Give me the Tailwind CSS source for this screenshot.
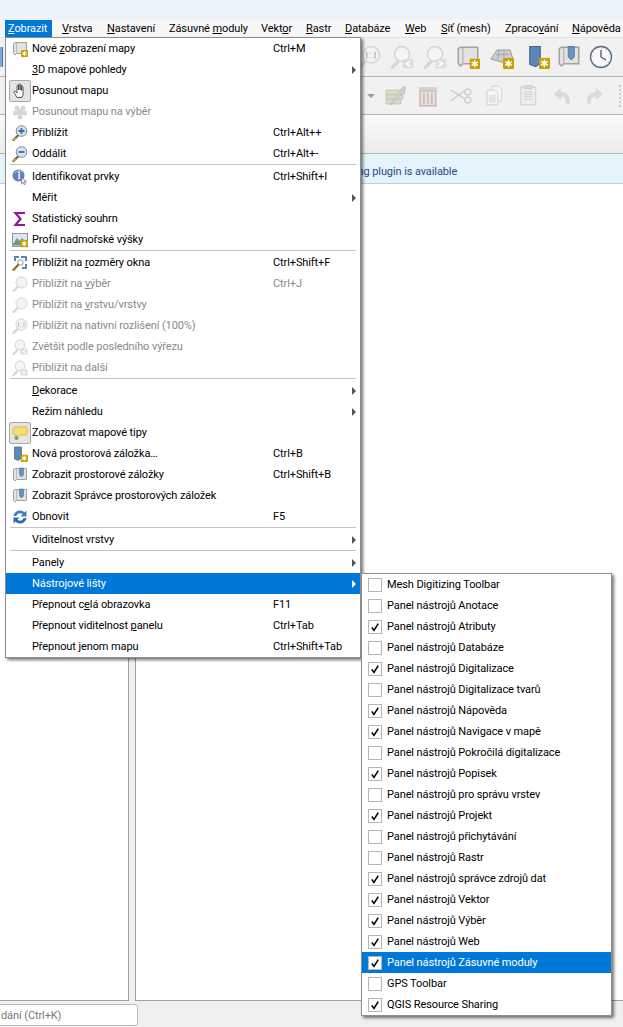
<!doctype html>
<html><head><meta charset="utf-8"><script src="https://cdn.jsdelivr.net/npm/@tailwindcss/browser@4"></script></head>
<body class="m-0 overflow-hidden">
<svg width="0" height="0" class="absolute">
<defs>
<symbol id="badge" viewBox="0 0 8 8"><rect width="8" height="8" rx="1" fill="#c9a000"/><path d="M4 1.2V6.8M1.6 2.6L6.4 5.4M1.6 5.4L6.4 2.6" stroke="#fff" stroke-width="1"/><circle cx="4" cy="4" r="1.5" fill="#fff"/></symbol>
<symbol id="scroll" viewBox="0 0 16 16"><path d="M3 1.5h11.500v11H4.500L3 14 1.500 12.500V2.500z" fill="#e2e2de" stroke="#a2a2a2"/><path d="M4.500 2v10.500" stroke="#bbb"/></symbol>
<symbol id="mapview" viewBox="0 0 16 16"><use href="#scroll" width="16" height="16"/><use href="#badge" x="9" y="9" width="7" height="7"/></symbol>
<symbol id="hand" viewBox="0 0 16 16"><path d="M5 14.500L2.200 9.500c-.6-1.200.8-1.900 1.500-.9L5 10V3c0-1.100 1.500-1.100 1.500 0v4-5.200c0-1.100 1.600-1.100 1.600 0V7 2.500c0-1.100 1.500-1.100 1.500 0V7.500 4.200c0-1.100 1.500-1.100 1.500 0V11c0 1.500-.7 2.500-1.300 3.500z" fill="#fff" stroke="#444" stroke-width=".9"/></symbol>
<symbol id="selpan" viewBox="0 0 16 16"><g fill="#d6d6d6"><circle cx="5" cy="4" r="2.500"/><circle cx="11" cy="4" r="2.500"/><circle cx="3.500" cy="9" r="2.500"/><circle cx="12.500" cy="9" r="2.500"/><circle cx="8" cy="8" r="3"/><circle cx="8" cy="13" r="2.500"/></g></symbol>
<symbol id="zoomin" viewBox="0 0 16 16"><path d="M1.500 15L6 10.500" stroke="#7a6a30" stroke-width="2.400" stroke-linecap="round"/><path d="M1.500 15L3.500 13" stroke="#e0b030" stroke-width="1.400"/><circle cx="9.500" cy="6" r="5.300" fill="#d9e3ef" stroke="#7b8796"/><path d="M9.500 3v6M6.500 6h6" stroke="#3e6aa8" stroke-width="1.800"/></symbol>
<symbol id="zoomout" viewBox="0 0 16 16"><path d="M1.500 15L6 10.500" stroke="#7a6a30" stroke-width="2.400" stroke-linecap="round"/><path d="M1.500 15L3.500 13" stroke="#e0b030" stroke-width="1.400"/><circle cx="9.500" cy="6" r="5.300" fill="#d9e3ef" stroke="#7b8796"/><path d="M6.500 6h6" stroke="#3e6aa8" stroke-width="1.800"/></symbol>
<symbol id="identify" viewBox="0 0 16 16"><circle cx="6.500" cy="6.500" r="6" fill="#5b84b8"/><path d="M3 4a5 4 0 0 1 7-1.500" stroke="#b9cde6" fill="none"/><path d="M6.200 5.500h1.300l-.6 4h1" stroke="#fff" stroke-width="1.400" fill="none"/><circle cx="7" cy="3.500" r=".9" fill="#fff"/><path d="M9.500 8.500l5 4-2.200.3 1.200 2.200-1.400.6-1.100-2.200-1.500 1.400z" fill="#eee" stroke="#777" stroke-width=".8"/></symbol>
<symbol id="sigma" viewBox="0 0 16 16"><path d="M13 2H3.500L8.500 8 3.500 14H13" fill="none" stroke="#93159b" stroke-width="2.200"/></symbol>
<symbol id="profile" viewBox="0 0 16 16"><rect x=".5" y="1.500" width="15" height="13" fill="#dfe6ee" stroke="#8f9aa6"/><path d="M1 12l4-6 3 3 2-3 5 5v2.500H1z" fill="#6f9a7c"/><use href="#badge" x="8.500" y="8" width="7.500" height="7.500"/></symbol>
<symbol id="zoomfull" viewBox="0 0 16 16"><path d="M2 1h5v2H4v3H2zM9 1h6v5h-2V3H9zM13 9h2v5h-5v-2h3z" fill="#5b86bd"/><rect x="5" y="4" width="7" height="7" fill="#e6edf5"/><circle cx="8.500" cy="7.500" r="2.500" fill="#fff" stroke="#9ab"/><path d="M1.500 15L6 10" stroke="#8a7220" stroke-width="2.200" stroke-linecap="round"/></symbol>
<symbol id="zgrey" viewBox="0 0 16 16"><path d="M1.500 15L5.500 11" stroke="#d8d8d0" stroke-width="2.400" stroke-linecap="round"/><circle cx="9.500" cy="6.500" r="5.500" fill="#f3f3f3" stroke="#d4d4d4"/></symbol>
<symbol id="z11" viewBox="0 0 16 16"><path d="M1.500 15L5.500 11" stroke="#d8d8d0" stroke-width="2.400" stroke-linecap="round"/><circle cx="9.500" cy="6.500" r="5.500" fill="#f3f3f3" stroke="#d4d4d4"/><path d="M6.500 4.500V9M9 5v.5M9 8v.5M12 4.500V9" stroke="#bdbdbd" stroke-width="1"/></symbol>
<symbol id="zlast" viewBox="0 0 16 16"><path d="M1.500 15L5 11.500" stroke="#d8d8d0" stroke-width="2.200" stroke-linecap="round"/><circle cx="8" cy="6" r="5" fill="#f5f5f5" stroke="#d4d4d4"/><rect x="8.500" y="9.500" width="7" height="6" fill="#d8dde2"/><path d="M13.500 10.800l-2.500 1.700 2.500 1.700" stroke="#fff" stroke-width="1.200" fill="none"/></symbol>
<symbol id="znext" viewBox="0 0 16 16"><path d="M1.500 15L5 11.500" stroke="#d8d8d0" stroke-width="2.200" stroke-linecap="round"/><circle cx="8" cy="6" r="5" fill="#f5f5f5" stroke="#d4d4d4"/><rect x="8.500" y="9.500" width="7" height="6" fill="#d8dde2"/><path d="M10.500 10.800l2.500 1.700-2.500 1.700" stroke="#fff" stroke-width="1.200" fill="none"/></symbol>
<symbol id="tips" viewBox="0 0 16 16"><path d="M3 2h10.500c1 0 1.500 .6 1.500 1.500v5c0 1-.6 1.500-1.500 1.500H7l-3 2.500V10H3c-1 0-1.800-.6-1.800-1.500v-5C1.200 2.600 2 2 3 2z" fill="#f6dd72" stroke="#d9b84a"/><circle cx="4.500" cy="13" r="2" fill="#7aa05a"/></symbol>
<symbol id="bknew" viewBox="0 0 16 16"><path d="M2.500 1h7v11l-3 2.500-4-1.500z" fill="#5a86b8" stroke="#3d6594" stroke-width=".7"/><use href="#badge" x="8.500" y="8.500" width="7.500" height="7.500"/></symbol>
<symbol id="bks" viewBox="0 0 16 16"><use href="#scroll" width="16" height="16"/><path d="M7.500 1h4v7l-2 2-2-2z" fill="#6a92c0" stroke="#4d77a6" stroke-width=".6"/></symbol>
<symbol id="refresh" viewBox="0 0 16 16"><path d="M1.500 7C2 3.500 5 1.500 8 1.500c2 0 3.500 .8 4.500 2L14.500 1.500v6h-6l2-2C9.800 4.700 9 4.300 8 4.300 6.300 4.300 5 5.300 4.500 7z" fill="#3f7fc2"/><path d="M14.500 9c-.5 3.500-3.500 5.500-6.500 5.500-2 0-3.500-.8-4.500-2L1.500 14.500v-6h6l-2 2c.7.8 1.500 1.200 2.500 1.200 1.700 0 3-1 3.500-2.700z" fill="#2a6cb0"/></symbol>
<symbol id="check" viewBox="0 0 14 14"><path d="M3.300 7.500L5.800 11 10.800 3" fill="none" stroke="#000" stroke-width="1.800"/></symbol>
</defs>
</svg>
<div class="relative w-[623px] h-[1027px] overflow-hidden bg-[#f0f0f0] font-['Roboto'] text-[11px] tracking-[-0.1px] text-black flex flex-col">
<div class="h-[20px] bg-[#eef3fa]"></div>
<div class="h-[17px] flex bg-[#f7f7f7] items-center whitespace-nowrap leading-[18px]">
 <span class="ml-[5px] w-[47px] h-[17px] bg-[#0078d7] text-white pl-[3px]"><u>Z</u>obrazit</span>
 <span class="ml-[10px] w-[45px]"><u>V</u>rstva</span>
 <span class="w-[62px]"><u>N</u>astavení</span>
 <span class="w-[92px]">Zásuvné <u>m</u>oduly</span>
 <span class="w-[45px]">Vekt<u>o</u>r</span>
 <span class="w-[39px]"><u>R</u>astr</span>
 <span class="w-[60px]"><u>D</u>atabáze</span>
 <span class="w-[36px]"><u>W</u>eb</span>
 <span class="w-[64px]"><u>S</u>íť (mesh)</span>
 <span class="w-[67px]">Zpraco<u>v</u>ání</span>
 <span><u>N</u>ápověda</span>
</div>
<!-- toolbar 1 -->
<div class="h-[40px] border-t border-b border-t-[#e4e4e4] border-b-[#b5b5b5] bg-[#f1f1f1] relative flex items-center">
 <div class="w-[3px] h-[20px] bg-[#7fa9d6] border-r border-[#4a78ad]"></div>
 <div class="ml-[362px] flex items-center">
  <svg class="w-[24px] h-[24px] -ml-[8px]" viewBox="0 0 16 16"><use href="#z11"/></svg>
  <svg class="w-[24px] h-[24px] ml-[9px]" viewBox="0 0 16 16"><use href="#zlast"/></svg>
  <svg class="w-[24px] h-[24px] ml-[9px]" viewBox="0 0 16 16"><use href="#znext"/></svg>
  <svg class="w-[24px] h-[24px] ml-[9px]" viewBox="0 0 16 16"><use href="#mapview"/></svg>
  <svg class="w-[24px] h-[24px] ml-[10px]" viewBox="0 0 24 24"><path d="M1 14L7 5h13l3 9-8 4z" fill="#cfcfcf" stroke="#999"/><path d="M6 10l13-1M9 5l-1 9M14 5l0 12" stroke="#a8a8a8" fill="none"/><use href="#badge" x="13" y="13" width="11" height="11"/></svg>
  <svg class="w-[24px] h-[24px] ml-[12px]" viewBox="0 0 16 16"><use href="#bknew"/></svg>
  <svg class="w-[24px] h-[24px] ml-[7px]" viewBox="0 0 16 16"><use href="#bks"/></svg>
  <svg class="w-[24px] h-[24px] ml-[8px]" viewBox="0 0 24 24"><circle cx="12" cy="12" r="10.500" fill="#fafafa" stroke="#5a6a7a" stroke-width="1.300"/><circle cx="12" cy="12" r="8.800" fill="none" stroke="#7ea6d0" stroke-dasharray="1 3.600"/><path d="M12 5v7l5 3" fill="none" stroke="#555" stroke-width="1.300"/></svg>
 </div>
</div>
<!-- toolbar 2 -->
<div class="h-[38px] border-b border-[#b5b5b5] bg-[#f1f1f1] flex items-center">
 <div class="ml-[367px] w-0 h-0 border-x-[4px] border-t-[4px] border-x-transparent border-t-[#999]"></div>
 <svg class="ml-[10px] w-[22px] h-[22px]" viewBox="0 0 22 22"><path d="M1 5h19v4H1zM1 10h17v4H1zM1 15h15v4H1z" fill="#dcdcc8" stroke="#c4c4b0"/><path d="M19 1l2 2-12 15-3 2 1-3z" fill="#d8d8d0" stroke="#bbb"/></svg>
 <svg class="ml-[11px] w-[20px] h-[22px]" viewBox="0 0 20 22"><path d="M1 2h18v3H1z" fill="#d8cfc8"/><path d="M2 6h16v15H2z" fill="#e8e0dc" stroke="#c9b9b4" stroke-width="1.500"/><path d="M6 8v11M10 8v11M14 8v11" stroke="#c9b9b4" stroke-width="1.500"/></svg>
 <svg class="ml-[13px] w-[22px] h-[18px]" viewBox="0 0 22 18"><path d="M1 3l14 9M1 14l13-10" stroke="#cfcfcf" stroke-width="1.500"/><circle cx="18" cy="5" r="3" fill="none" stroke="#cfcfcf" stroke-width="1.500"/><circle cx="18" cy="13" r="3" fill="none" stroke="#cfcfcf" stroke-width="1.500"/></svg>
 <svg class="ml-[14px] w-[17px] h-[21px]" viewBox="0 0 17 21"><path d="M6 1h7l3 3v12H6z" fill="#f6f6f6" stroke="#d4d4d4"/><path d="M1 5h8l3 3v12H1z" fill="#f6f6f6" stroke="#cfcfcf"/><path d="M3 11h7M3 13h7M3 15h7M3 17h7" stroke="#d4d4d4"/></svg>
 <svg class="ml-[17px] w-[17px] h-[21px]" viewBox="0 0 17 21"><rect x="1" y="2" width="15" height="18" fill="#eee" stroke="#ccc"/><rect x="5" y="0.500" width="7" height="3" fill="#ddd" stroke="#ccc"/><path d="M4 7h9M4 9.500h9M4 12h9M4 14.500h9" stroke="#cfcfcf"/></svg>
 <svg class="ml-[16px] w-[19px] h-[17px]" viewBox="0 0 19 17"><path d="M8 1L1 7l7 6V9.500c4 0 5 2 5 7.500h4c1-8-3-12-9-12z" fill="#dcd8d2"/></svg>
 <svg class="ml-[14px] w-[19px] h-[17px]" viewBox="0 0 19 17"><path d="M11 1l7 6-7 6V9.500c-4 0-5 2-5 7.500H2c-1-8 3-12 9-12z" fill="#d8dbd6"/></svg>
 <div class="ml-[15px] w-[4px] h-[22px] border-l-2 border-dotted border-[#c8c8c8]"></div>
</div>
<div class="h-[39px] border-b border-[#b5b5b5] bg-gradient-to-b from-[#fafafa] to-[#ececec]"></div>
<div class="h-[30px] bg-[#e5f3fb] border-b border-[#b9d0e6] text-[#2a4b8a] pl-[355px] leading-[35px]">ing plugin is available</div>
<div class="flex-1 flex gap-[6px] pb-[26px]">
 <div class="w-[129px] bg-white border-r border-b border-[#a0a0a0]"></div>
 <div class="flex-1 bg-white border-l border-b border-[#a0a0a0]"></div>
</div>
<div class="absolute left-[-10px] bottom-[1px] w-[148px] h-[22px] bg-white border border-[#bbb] rounded-[3px] text-[#777] pl-[10px] leading-[22px]">dání (Ctrl+K)</div>

<!-- main menu -->
<div class="absolute left-[5px] top-[37px] w-[356px] h-[621px] bg-white border border-[#8f8f8f] shadow-[2px_2px_3px_rgba(0,0,0,0.55)] flex flex-col whitespace-nowrap [&>div>span:not(:empty)]:pt-[2px]">
 <div class="flex h-[21px] items-center"><svg class="ml-[6px] w-[16px] h-[16px] mr-[4px]"><use href="#mapview"/></svg><span class="w-[241px]">Nové <u>z</u>obrazení mapy</span><span>Ctrl+M</span></div>
 <div class="flex h-[21px] items-center pl-[26px]"><span><u>3</u>D mapové pohledy</span><span class="ml-auto mr-[4px] w-0 h-0 border-y-[4px] border-l-[4px] border-y-transparent border-l-[#555]"></span></div>
 <div class="flex h-[21px] items-center"><span class="ml-[3px] mr-[1px] w-[22px] h-[22px] pt-0! bg-[#e4e4e4] border border-[#a8a8a8] rounded-[2px] flex items-center justify-center"><svg class="w-[16px] h-[16px]"><use href="#hand"/></svg></span><span class="w-[241px]">Posunout mapu</span></div>
 <div class="flex h-[21px] items-center text-[#8a8a8a]"><svg class="ml-[6px] w-[16px] h-[16px] mr-[4px]"><use href="#selpan"/></svg><span class="w-[241px]">Posunout mapu na výběr</span></div>
 <div class="flex h-[21px] items-center"><svg class="ml-[6px] w-[16px] h-[16px] mr-[4px]"><use href="#zoomin"/></svg><span class="w-[241px]">Přiblížit</span><span>Ctrl+Alt++</span></div>
 <div class="flex h-[21px] items-center"><svg class="ml-[6px] w-[16px] h-[16px] mr-[4px]"><use href="#zoomout"/></svg><span class="w-[241px]">Oddálit</span><span>Ctrl+Alt+-</span></div>
 <div class="h-[2px] mx-[4px] border-t border-[#c4c4c4]"></div>
 <div class="flex h-[21px] items-center"><svg class="ml-[6px] w-[16px] h-[16px] mr-[4px]"><use href="#identify"/></svg><span class="w-[241px]">Identifikovat prvky</span><span>Ctrl+Shift+I</span></div>
 <div class="flex h-[21px] items-center pl-[26px]"><span>Měřit</span><span class="ml-auto mr-[4px] w-0 h-0 border-y-[4px] border-l-[4px] border-y-transparent border-l-[#555]"></span></div>
 <div class="flex h-[21px] items-center"><svg class="ml-[6px] w-[16px] h-[16px] mr-[4px]"><use href="#sigma"/></svg><span>Statistický souhrn</span></div>
 <div class="flex h-[21px] items-center"><svg class="ml-[6px] w-[16px] h-[16px] mr-[4px]"><use href="#profile"/></svg><span>Profil nadmořské výšky</span></div>
 <div class="h-[2px] mx-[4px] border-t border-[#c4c4c4]"></div>
 <div class="flex h-[21px] items-center"><svg class="ml-[6px] w-[16px] h-[16px] mr-[4px]"><use href="#zoomfull"/></svg><span class="w-[241px]">Přiblížit na <u>r</u>ozměry okna</span><span>Ctrl+Shift+F</span></div>
 <div class="flex h-[21px] items-center text-[#8a8a8a]"><svg class="ml-[6px] w-[16px] h-[16px] mr-[4px]"><use href="#zgrey"/></svg><span class="w-[241px]">Přiblížit na <u>v</u>ýběr</span><span>Ctrl+J</span></div>
 <div class="flex h-[21px] items-center text-[#8a8a8a]"><svg class="ml-[6px] w-[16px] h-[16px] mr-[4px]"><use href="#zgrey"/></svg><span>Přiblížit na <u>v</u>rstvu/vrstvy</span></div>
 <div class="flex h-[21px] items-center text-[#8a8a8a]"><svg class="ml-[6px] w-[16px] h-[16px] mr-[4px]"><use href="#z11"/></svg><span>Přiblížit na nativní rozlišení (100%)</span></div>
 <div class="flex h-[21px] items-center text-[#8a8a8a]"><svg class="ml-[6px] w-[16px] h-[16px] mr-[4px]"><use href="#zlast"/></svg><span>Zvětšit podle posledního výřezu</span></div>
 <div class="flex h-[21px] items-center text-[#8a8a8a]"><svg class="ml-[6px] w-[16px] h-[16px] mr-[4px]"><use href="#znext"/></svg><span>Přiblížit na další</span></div>
 <div class="h-[2px] mx-[4px] border-t border-[#c4c4c4]"></div>
 <div class="flex h-[21px] items-center pl-[26px]"><span><u>D</u>ekorace</span><span class="ml-auto mr-[4px] w-0 h-0 border-y-[4px] border-l-[4px] border-y-transparent border-l-[#555]"></span></div>
 <div class="flex h-[21px] items-center pl-[26px]"><span>Režim náhledu</span><span class="ml-auto mr-[4px] w-0 h-0 border-y-[4px] border-l-[4px] border-y-transparent border-l-[#555]"></span></div>
 <div class="flex h-[21px] items-center"><span class="ml-[3px] mr-[1px] w-[22px] h-[22px] pt-0! bg-[#e4e4e4] border border-[#a8a8a8] rounded-[2px] flex items-center justify-center"><svg class="w-[16px] h-[16px]"><use href="#tips"/></svg></span><span>Zobrazovat mapové tipy</span></div>
 <div class="flex h-[21px] items-center"><svg class="ml-[6px] w-[16px] h-[16px] mr-[4px]"><use href="#bknew"/></svg><span class="w-[241px]">Nová prostorová záložka…</span><span>Ctrl+B</span></div>
 <div class="flex h-[21px] items-center"><svg class="ml-[6px] w-[16px] h-[16px] mr-[4px]"><use href="#bks"/></svg><span class="w-[241px]">Zobrazit prostorové záložky</span><span>Ctrl+Shift+B</span></div>
 <div class="flex h-[21px] items-center"><svg class="ml-[6px] w-[16px] h-[16px] mr-[4px]"><use href="#bks"/></svg><span>Zobrazit Správce prostorových záložek</span></div>
 <div class="flex h-[21px] items-center"><svg class="ml-[6px] w-[16px] h-[16px] mr-[4px]"><use href="#refresh"/></svg><span class="w-[241px]">Obnovit</span><span>F5</span></div>
 <div class="h-[2px] mx-[4px] border-t border-[#c4c4c4]"></div>
 <div class="flex h-[21px] items-center pl-[26px]"><span>Viditelnost vrstvy</span><span class="ml-auto mr-[4px] w-0 h-0 border-y-[4px] border-l-[4px] border-y-transparent border-l-[#555]"></span></div>
 <div class="h-[2px] mx-[4px] border-t border-[#c4c4c4]"></div>
 <div class="flex h-[21px] items-center pl-[26px]"><span>Panely</span><span class="ml-auto mr-[4px] w-0 h-0 border-y-[4px] border-l-[4px] border-y-transparent border-l-[#555]"></span></div>
 <div class="flex h-[21px] items-center pl-[26px] bg-[#0078d7] text-white"><span>Nástrojové lišty</span><span class="ml-auto mr-[4px] w-0 h-0 border-y-[4px] border-l-[4px] border-y-transparent border-l-white"></span></div>
 <div class="flex h-[21px] items-center pl-[26px]"><span class="w-[241px]">Přepnout c<u>e</u>lá obrazovka</span><span>F11</span></div>
 <div class="flex h-[21px] items-center pl-[26px]"><span class="w-[241px]">Přepnout viditelnost <u>p</u>anelu</span><span>Ctrl+Tab</span></div>
 <div class="flex h-[21px] items-center pl-[26px]"><span class="w-[241px]">Přepnout jenom mapu</span><span>Ctrl+Shift+Tab</span></div>
</div>

<!-- submenu -->
<div class="absolute left-[361px] top-[573px] w-[251px] h-[443px] bg-white border border-[#8f8f8f] shadow-[2px_2px_3px_rgba(0,0,0,0.55)] flex flex-col whitespace-nowrap [&>div>span:not(:empty)]:pt-[2px]">
 <div class="flex h-[21px] items-center"><span class="ml-[6px] mr-[5px] w-[14px] h-[14px] bg-white border border-[#b5b5b5]"></span><span>Mesh Digitizing Toolbar</span></div>
 <div class="flex h-[21px] items-center"><span class="ml-[6px] mr-[5px] w-[14px] h-[14px] bg-white border border-[#b5b5b5]"></span><span>Panel nástrojů Anotace</span></div>
 <div class="flex h-[21px] items-center"><svg class="ml-[6px] mr-[5px] w-[14px] h-[14px] bg-white border border-[#b5b5b5]" viewBox="0 0 14 14"><use href="#check"/></svg><span>Panel nástrojů Atributy</span></div>
 <div class="flex h-[21px] items-center"><span class="ml-[6px] mr-[5px] w-[14px] h-[14px] bg-white border border-[#b5b5b5]"></span><span>Panel nástrojů Databáze</span></div>
 <div class="flex h-[21px] items-center"><svg class="ml-[6px] mr-[5px] w-[14px] h-[14px] bg-white border border-[#b5b5b5]" viewBox="0 0 14 14"><use href="#check"/></svg><span>Panel nástrojů Digitalizace</span></div>
 <div class="flex h-[21px] items-center"><span class="ml-[6px] mr-[5px] w-[14px] h-[14px] bg-white border border-[#b5b5b5]"></span><span>Panel nástrojů Digitalizace tvarů</span></div>
 <div class="flex h-[21px] items-center"><svg class="ml-[6px] mr-[5px] w-[14px] h-[14px] bg-white border border-[#b5b5b5]" viewBox="0 0 14 14"><use href="#check"/></svg><span>Panel nástrojů Nápověda</span></div>
 <div class="flex h-[21px] items-center"><svg class="ml-[6px] mr-[5px] w-[14px] h-[14px] bg-white border border-[#b5b5b5]" viewBox="0 0 14 14"><use href="#check"/></svg><span>Panel nástrojů Navigace v mapě</span></div>
 <div class="flex h-[21px] items-center"><span class="ml-[6px] mr-[5px] w-[14px] h-[14px] bg-white border border-[#b5b5b5]"></span><span>Panel nástrojů Pokročilá digitalizace</span></div>
 <div class="flex h-[21px] items-center"><svg class="ml-[6px] mr-[5px] w-[14px] h-[14px] bg-white border border-[#b5b5b5]" viewBox="0 0 14 14"><use href="#check"/></svg><span>Panel nástrojů Popisek</span></div>
 <div class="flex h-[21px] items-center"><span class="ml-[6px] mr-[5px] w-[14px] h-[14px] bg-white border border-[#b5b5b5]"></span><span>Panel nástrojů pro správu vrstev</span></div>
 <div class="flex h-[21px] items-center"><svg class="ml-[6px] mr-[5px] w-[14px] h-[14px] bg-white border border-[#b5b5b5]" viewBox="0 0 14 14"><use href="#check"/></svg><span>Panel nástrojů Projekt</span></div>
 <div class="flex h-[21px] items-center"><span class="ml-[6px] mr-[5px] w-[14px] h-[14px] bg-white border border-[#b5b5b5]"></span><span>Panel nástrojů přichytávání</span></div>
 <div class="flex h-[21px] items-center"><span class="ml-[6px] mr-[5px] w-[14px] h-[14px] bg-white border border-[#b5b5b5]"></span><span>Panel nástrojů Rastr</span></div>
 <div class="flex h-[21px] items-center"><svg class="ml-[6px] mr-[5px] w-[14px] h-[14px] bg-white border border-[#b5b5b5]" viewBox="0 0 14 14"><use href="#check"/></svg><span>Panel nástrojů správce zdrojů dat</span></div>
 <div class="flex h-[21px] items-center"><svg class="ml-[6px] mr-[5px] w-[14px] h-[14px] bg-white border border-[#b5b5b5]" viewBox="0 0 14 14"><use href="#check"/></svg><span>Panel nástrojů Vektor</span></div>
 <div class="flex h-[21px] items-center"><svg class="ml-[6px] mr-[5px] w-[14px] h-[14px] bg-white border border-[#b5b5b5]" viewBox="0 0 14 14"><use href="#check"/></svg><span>Panel nástrojů Výběr</span></div>
 <div class="flex h-[21px] items-center"><svg class="ml-[6px] mr-[5px] w-[14px] h-[14px] bg-white border border-[#b5b5b5]" viewBox="0 0 14 14"><use href="#check"/></svg><span>Panel nástrojů Web</span></div>
 <div class="flex h-[21px] items-center bg-[#0078d7] text-white"><svg class="ml-[6px] mr-[5px] w-[14px] h-[14px] bg-white border border-[#b5b5b5]" viewBox="0 0 14 14"><use href="#check"/></svg><span>Panel nástrojů Zásuvné moduly</span></div>
 <div class="flex h-[21px] items-center"><span class="ml-[6px] mr-[5px] w-[14px] h-[14px] bg-white border border-[#b5b5b5]"></span><span>GPS Toolbar</span></div>
 <div class="flex h-[21px] items-center"><svg class="ml-[6px] mr-[5px] w-[14px] h-[14px] bg-white border border-[#b5b5b5]" viewBox="0 0 14 14"><use href="#check"/></svg><span>QGIS Resource Sharing</span></div>
</div>
</div>
</body></html>
